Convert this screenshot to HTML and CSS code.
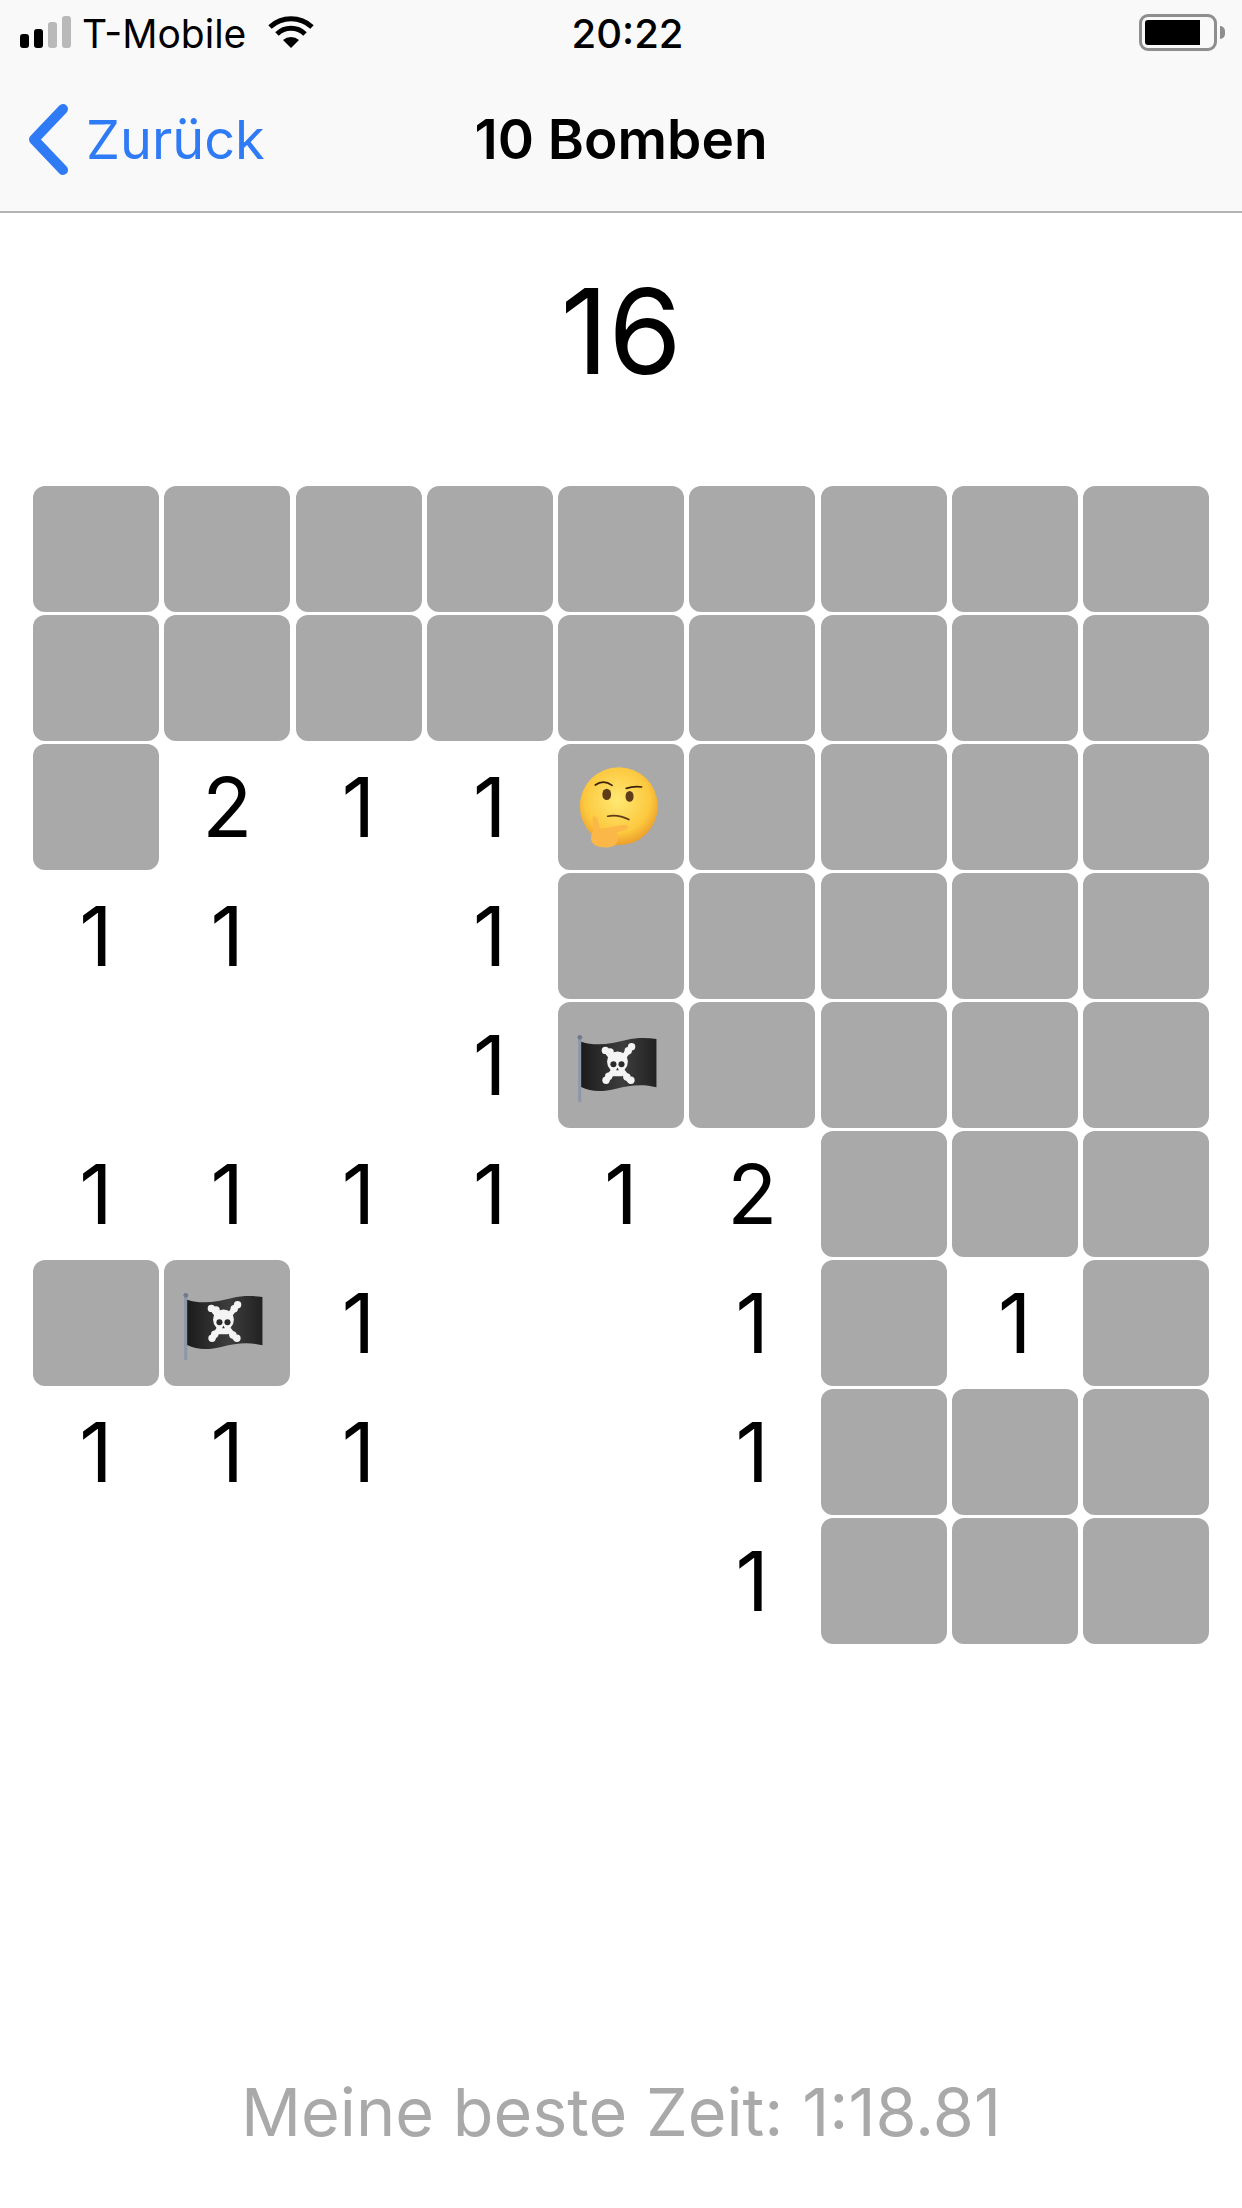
FILE: index.html
```html
<!DOCTYPE html>
<html lang="de">
<head>
    <meta charset="UTF-8">
    <meta name="viewport" content="width=device-width, initial-scale=1.0">
    <title>10 Bomben</title>
    <link rel="stylesheet" href="styles.css">
</head>
<body>
    <svg class="defs" width="0" height="0">
        <defs>
            <linearGradient id="flagCloth" x1="0" x2="1" y1="0" y2="0">
                <stop offset="0" stop-color="#1b1b1b"/>
                <stop offset="0.55" stop-color="#3d3d3d"/>
                <stop offset="1" stop-color="#222"/>
            </linearGradient>
            <radialGradient id="faceSkin" cx="0.48" cy="0.42" r="0.6">
                <stop offset="0" stop-color="#ffe873"/>
                <stop offset="0.7" stop-color="#fcc93f"/>
                <stop offset="1" stop-color="#eb9a28"/>
            </radialGradient>
            <symbol id="flag" viewBox="57 37 375 375">
                <rect x="117" y="142" width="9" height="193" fill="#8d97a8"/>
                <circle cx="122" cy="142" r="7" fill="#6f7a8c"/>
                <path d="M126 155C170 170 220 160 260 150C290 143 320 143 350 147L350 291C310 280 270 285 230 295C190 305 155 305 126 290Z" fill="url(#flagCloth)"/>
                <g stroke="#f4f4f4" stroke-width="16" stroke-linecap="round">
                    <path d="M204 186L268 268"/>
                    <path d="M272 174L204 266"/>
                </g>
                <g fill="#f4f4f4">
                    <circle cx="198" cy="181" r="11"/><circle cx="212" cy="186" r="11"/>
                    <circle cx="276" cy="170" r="11"/><circle cx="266" cy="182" r="11"/>
                    <circle cx="200" cy="270" r="11"/><circle cx="208" cy="258" r="11"/>
                    <circle cx="274" cy="270" r="11"/><circle cx="262" cy="260" r="11"/>
                    <circle cx="234" cy="215" r="31"/>
                    <rect x="214" y="232" width="38" height="26" rx="6"/>
                </g>
                <g fill="#2a2a2a">
                    <circle cx="222" cy="222" r="9"/>
                    <circle cx="246" cy="222" r="9"/>
                    <path d="M234 232l4 8h-8z"/>
                </g>
            </symbol>
        </defs>
    </svg>

    <div class="status-bar">
        <div class="status-left">
            <div class="signal">
                <span class="bar bar-1"></span>
                <span class="bar bar-2"></span>
                <span class="bar bar-3 off"></span>
                <span class="bar bar-4 off"></span>
            </div>
            <span class="carrier">T-Mobile</span>
            <svg class="wifi" width="48" height="34" viewBox="0 0 48 34">
                <path d="M3 12A31 31 0 0 1 45 12" fill="none" stroke="#000" stroke-width="5"/>
                <path d="M10 19A20 20 0 0 1 38 19" fill="none" stroke="#000" stroke-width="5"/>
                <path d="M16 25A12 12 0 0 1 32 25L24 33Z"/>
            </svg>
        </div>
        <div class="clock">20:22</div>
        <div class="status-right">
            <div class="battery"><div class="battery-level"></div></div>
            <div class="battery-nub"></div>
        </div>
    </div>

    <div class="nav">
        <div class="back">
            <svg width="42" height="72" viewBox="0 0 42 72">
                <path d="M35 5L6 35.500L35 66" fill="none" stroke="#2f7bf6" stroke-width="10" stroke-linecap="round" stroke-linejoin="round"/>
            </svg>
            <span>Zurück</span>
        </div>
        <div class="nav-title">10 Bomben</div>
    </div>

    <div class="timer">16</div>

    <div class="board">
        <div class="cell hidden"></div><div class="cell hidden"></div><div class="cell hidden"></div><div class="cell hidden"></div><div class="cell hidden"></div><div class="cell hidden"></div><div class="cell hidden"></div><div class="cell hidden"></div><div class="cell hidden"></div>
        <div class="cell hidden"></div><div class="cell hidden"></div><div class="cell hidden"></div><div class="cell hidden"></div><div class="cell hidden"></div><div class="cell hidden"></div><div class="cell hidden"></div><div class="cell hidden"></div><div class="cell hidden"></div>

        <div class="cell hidden"></div><div class="cell">2</div><div class="cell">1</div><div class="cell">1</div>
        <div class="cell hidden">
            <svg class="emoji" viewBox="57 40 375 375">
                <circle cx="238" cy="225" r="116" fill="url(#faceSkin)"/>
                <ellipse cx="202" cy="190" rx="13" ry="17" fill="#5e3c17"/>
                <ellipse cx="270" cy="196" rx="12" ry="16" fill="#5e3c17"/>
                <path d="M168 162Q192 144 218 163" fill="none" stroke="#3e2208" stroke-width="5" stroke-linecap="round"/>
                <path d="M260 172Q282 165 306 168" fill="none" stroke="#3e2208" stroke-width="5" stroke-linecap="round"/>
                <path d="M205 255Q235 248 268 265" fill="none" stroke="#5e3c17" stroke-width="5" stroke-linecap="round"/>
                <path d="M165 255C175 255 178 275 182 292L240 283C258 279 272 282 262 293C256 299 240 300 232 303C238 315 236 335 225 342C205 352 172 350 160 335C150 320 158 302 166 292C160 278 155 258 165 255Z" fill="#fbb748"/>
            </svg>
        </div>
        <div class="cell hidden"></div><div class="cell hidden"></div><div class="cell hidden"></div><div class="cell hidden"></div>

        <div class="cell">1</div><div class="cell">1</div><div class="cell"></div><div class="cell">1</div><div class="cell hidden"></div><div class="cell hidden"></div><div class="cell hidden"></div><div class="cell hidden"></div><div class="cell hidden"></div>

        <div class="cell"></div><div class="cell"></div><div class="cell"></div><div class="cell">1</div>
        <div class="cell hidden"><svg class="emoji"><use href="#flag"/></svg></div>
        <div class="cell hidden"></div><div class="cell hidden"></div><div class="cell hidden"></div><div class="cell hidden"></div>

        <div class="cell">1</div><div class="cell">1</div><div class="cell">1</div><div class="cell">1</div><div class="cell">1</div><div class="cell">2</div><div class="cell hidden"></div><div class="cell hidden"></div><div class="cell hidden"></div>

        <div class="cell hidden"></div>
        <div class="cell hidden"><svg class="emoji"><use href="#flag"/></svg></div>
        <div class="cell">1</div><div class="cell"></div><div class="cell"></div><div class="cell">1</div><div class="cell hidden"></div><div class="cell">1</div><div class="cell hidden"></div>

        <div class="cell">1</div><div class="cell">1</div><div class="cell">1</div><div class="cell"></div><div class="cell"></div><div class="cell">1</div><div class="cell hidden"></div><div class="cell hidden"></div><div class="cell hidden"></div>

        <div class="cell"></div><div class="cell"></div><div class="cell"></div><div class="cell"></div><div class="cell"></div><div class="cell">1</div><div class="cell hidden"></div><div class="cell hidden"></div><div class="cell hidden"></div>
    </div>

    <div class="best-time">Meine beste Zeit: 1:18.81</div>
</body>
</html>
```

FILE: styles.css
```css
body {
    margin: 0;
    height: 2208px;
    overflow: hidden;
    background-color: #ffffff;
    color: #000000;
    font-family: Inter, Roboto, "Liberation Sans", sans-serif;
    display: flex;
    flex-direction: column;
}

.defs {
    position: absolute;
}

/* status bar */
.status-bar {
    height: 64px;
    background-color: #f9f9f9;
    display: grid;
    grid-template-columns: 1fr auto 1fr;
    align-items: center;
    padding: 0 17px 0 20px;
}

.status-left {
    display: flex;
    align-items: center;
}

.signal {
    display: flex;
    align-items: flex-end;
    gap: 5px;
    height: 32px;
}

.bar {
    width: 9px;
    border-radius: 3px;
    background-color: #000;
}

.bar.off {
    background-color: #b9b9b9;
}

.bar-1 { height: 14px; }
.bar-2 { height: 19px; }
.bar-3 { height: 26px; }
.bar-4 { height: 32px; }

.carrier {
    font-size: 39px;
    margin-left: 11px;
    margin-top: 2px;
}

.wifi {
    margin-left: 21px;
}

.clock {
    font-size: 40px;
    font-weight: 500;
    margin-left: 10px;
    margin-top: 3px;
}

.status-right {
    display: flex;
    align-items: center;
    justify-content: flex-end;
    gap: 3px;
}

.battery {
    width: 78px;
    height: 37px;
    box-sizing: border-box;
    border: 3px solid #8e8e8e;
    border-radius: 9px;
    padding: 3px;
}

.battery-level {
    width: 55px;
    height: 100%;
    background-color: #000;
    border-radius: 3px 0 0 3px;
}

.battery-nub {
    width: 5px;
    height: 13px;
    background-color: #8e8e8e;
    border-radius: 0 5px 5px 0;
}

/* nav bar */
.nav {
    height: 149px;
    box-sizing: border-box;
    background-color: #f9f9f9;
    border-bottom: 2px solid #b4b4b4;
    display: grid;
    grid-template-columns: 1fr auto 1fr;
    align-items: center;
    padding: 0 28px;
}

.back {
    display: flex;
    align-items: center;
    gap: 16px;
    color: #2f7bf6;
    font-size: 54px;
    margin-top: 4px;
}

.nav-title {
    font-size: 55px;
    font-weight: 600;
    margin-top: 2px;
}

/* timer */
.timer {
    text-align: center;
    font-size: 118px;
    line-height: 136px;
    margin-top: 50px;
}

/* board */
.board {
    width: 1176px;
    margin: 87px 0 0 33px;
    display: grid;
    grid-template-columns: repeat(9, 126px);
    grid-auto-rows: 126px;
    justify-content: space-between;
    row-gap: 3px;
}

.cell {
    display: flex;
    align-items: center;
    justify-content: center;
    font-size: 82px;
}

.cell.hidden {
    background-color: #a9a9a9;
    border-radius: 12px;
}

.emoji {
    width: 126px;
    height: 126px;
}

/* footer */
.best-time {
    margin-top: auto;
    margin-bottom: 56px;
    text-align: center;
    font-size: 66.5px;
    color: #a9a9a9;
    line-height: 80px;
}
```
